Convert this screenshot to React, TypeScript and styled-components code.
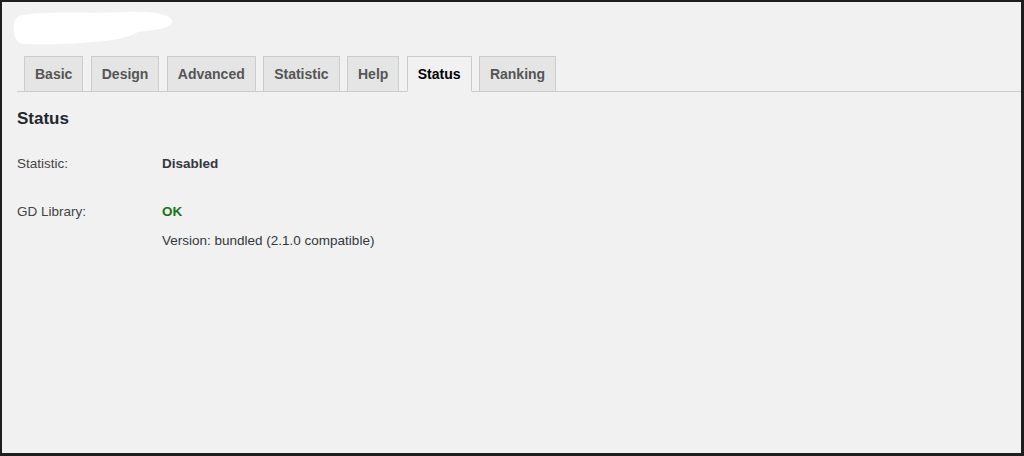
import styled, { createGlobalStyle } from "styled-components";

const GlobalStyle = createGlobalStyle`
  html, body {
    margin: 0;
    padding: 0;
    background: #f1f1f1;
  }
  body {
    font-family: "Liberation Sans", Arial, sans-serif;
    color: #23282d;
  }
`;

const tabs = ["Basic", "Design", "Advanced", "Statistic", "Help", "Status", "Ranking"];

const Frame = styled.div`
  box-sizing: border-box;
  width: 1024px;
  height: 456px;
  background: #f1f1f1;
  border-style: solid;
  border-color: #1e1e1e;
  border-width: 2px 3px 3px 2px;
  overflow: hidden;
`;

const Logo = styled.svg`
  display: block;
  margin: 8px 0 0 11px;
`;

const TabBar = styled.div`
  display: flex;
  gap: 7.4px;
  margin: 10px 0 0 15px;
  padding-left: 7px;
  border-bottom: 1px solid #cccccc;
`;

const Tab = styled.div<{ $active?: boolean }>`
  box-sizing: border-box;
  height: 36px;
  margin-bottom: -1px;
  padding: 0 10px;
  display: flex;
  align-items: center;
  font-size: 14px;
  font-weight: 700;
  color: ${(p) => (p.$active ? "#000000" : "#555555")};
  background: ${(p) => (p.$active ? "#f1f1f1" : "#e5e5e5")};
  border: 1px solid #cccccc;
  border-bottom-color: ${(p) => (p.$active ? "#f1f1f1" : "#cccccc")};
`;

const Content = styled.div`
  padding-left: 15px;
`;

const Heading = styled.h2`
  margin: 15px 0 0;
  font-size: 17px;
  line-height: 24px;
  font-weight: 700;
  color: #23282d;
`;

const Row = styled.div<{ $gap: number }>`
  display: grid;
  grid-template-columns: 145px 1fr;
  margin-top: ${(p) => p.$gap}px;
  font-size: 13.5px;
  line-height: 20px;
`;

const Label = styled.div`
  color: #444444;
`;

const Value = styled.div`
  display: flex;
  flex-direction: column;
  gap: 9px;
  color: #32373c;
`;

const Strong = styled.span<{ $color?: string }>`
  font-weight: 700;
  color: ${(p) => p.$color ?? "#32373c"};
`;

export default function App() {
  return (
    <>
      <GlobalStyle />
      <Frame>
        <Logo width="162" height="36" viewBox="0 0 162 36">
          <path
            d="M6 6 C30 0 70 4 110 2 C140 1 160 4 159 12 C158 19 140 20 125 22 C118 27 100 31 80 32 C60 34 30 35 10 34 C2 33 0 24 1 14 C2 9 4 7 6 6 Z"
            fill="#ffffff"
          />
        </Logo>
        <TabBar>
          {tabs.map((t) => (
            <Tab key={t} $active={t === "Status"}>
              {t}
            </Tab>
          ))}
        </TabBar>
        <Content>
          <Heading>Status</Heading>
          <Row $gap={23}>
            <Label>Statistic:</Label>
            <Value>
              <Strong>Disabled</Strong>
            </Value>
          </Row>
          <Row $gap={28}>
            <Label>GD Library:</Label>
            <Value>
              <Strong $color="#147814">OK</Strong>
              <span>Version: bundled (2.1.0 compatible)</span>
            </Value>
          </Row>
        </Content>
      </Frame>
    </>
  );
}
